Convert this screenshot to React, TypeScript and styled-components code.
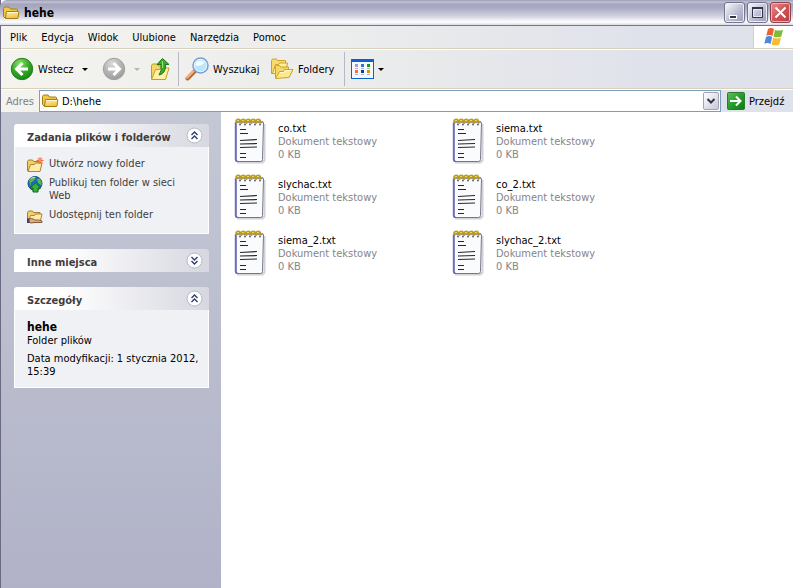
import React from 'react';
import styled, { createGlobalStyle, css } from 'styled-components';

const GlobalStyle = createGlobalStyle`
  * { box-sizing: border-box; }
  body { margin: 0; background: #fff; }
  body, button, input { font-family: "DejaVu Sans Condensed", "Noto Sans", sans-serif; font-size: 11px; color: #000; }
  button { border: 0; background: none; padding: 0; cursor: pointer; }
  svg { display: block; flex: none; }
`;

const Window = styled.div`
  display: flex;
  flex-direction: column;
  min-height: 100vh;
  border-left: 1px solid #6b6a84;
`;

const TitleBar = styled.header`
  display: flex;
  align-items: center;
  gap: 4px;
  height: 26px;
  padding: 0 2px 0 3px;
  margin-left: -1px;
  border-top-left-radius: 7px;
  border-bottom: 1px solid #77768f;
  background: linear-gradient(#9a9ab2 0, #c4c4d6 2px, #a4a4bd 4px, #abacc4 8px, #d0d0df 16px, #fff 22px, #d8d8e4 25px);
`;

const Title = styled.h1`
  flex: 1;
  margin: 0;
  font-size: 12px;
  line-height: 16px;
  font-weight: bold;
`;

const Captions = styled.div`
  display: flex;
  gap: 2px;
`;

const CaptionButton = styled.button<{ $close?: boolean }>`
  display: grid;
  place-items: center;
  width: 21px;
  height: 21px;
  border: 1px solid ${p => (p.$close ? '#8c4450' : '#74748e')};
  border-radius: 3px;
  box-shadow: inset 0 0 0 1px ${p => (p.$close ? '#eeb0b0' : '#ededf6')};
  background: ${p => (p.$close
    ? 'linear-gradient(135deg, #e89090, #d25454 50%, #b83c44)'
    : 'linear-gradient(135deg, #fafafe, #b9b9cf 60%, #9c9cba)')};
`;

const barFill = css`
  background: linear-gradient(90deg, #f4f3ee, #ebecec 45%, #dfe1eb 85%);
`;

const MenuBar = styled.nav`
  ${barFill}
  display: flex;
  align-items: stretch;
  height: 23px;
  border-bottom: 1px solid #d8d2bd;
`;

const MenuList = styled.div`
  display: flex;
  flex: 1;
  gap: 14px;
  padding-left: 9px;
`;

const MenuItem = styled.button`
  line-height: 20px;
  padding-top: 1px;
`;

const FlagBox = styled.div`
  display: grid;
  place-items: center;
  width: 40px;
  border-left: 1px solid #d8d2bd;
  background: #fff;
`;

const ToolBar = styled.div`
  ${barFill}
  display: flex;
  align-items: center;
  height: 40px;
  padding-left: 9px;
  border-top: 1px solid #fff;
  border-bottom: 1px solid #d8d2bd;
`;

const ToolButton = styled.button<{ $width: number }>`
  display: flex;
  align-items: center;
  gap: 4px;
  width: ${p => p.$width}px;
  height: 30px;
  white-space: nowrap;
`;

const Divider = styled.div`
  width: 1px;
  height: 34px;
  margin-right: 6px;
  background: #b8b8c4;
`;

const Caret = styled.span<{ $faded?: boolean }>`
  border: 3px solid transparent;
  border-top-color: ${p => (p.$faded ? '#b5b5b5' : '#000')};
  border-bottom: 0;
`;

const AddressBar = styled.form`
  ${barFill}
  display: flex;
  align-items: center;
  height: 23px;
  padding-left: 5px;
  border-top: 1px solid #fff;
`;

const AddressLabel = styled.label`
  width: 33px;
  color: #7f7f86;
`;

const AddressField = styled.div`
  display: flex;
  flex: 1;
  align-items: center;
  gap: 3px;
  height: 22px;
  padding: 0 1px 0 2px;
  border: 1px solid #7f9db9;
  background: #fff;
`;

const AddressInput = styled.input`
  flex: 1;
  min-width: 0;
  padding: 0;
  border: 0;
  outline: 0;
  background: none;
`;

const DropButton = styled.button`
  display: grid;
  place-items: center;
  width: 16px;
  height: 18px;
  border: 1px solid #a3a3b8;
  border-radius: 2px;
  background: linear-gradient(135deg, #fff, #c8c8d8);
`;

const GoButton = styled.button`
  display: flex;
  align-items: center;
  gap: 4px;
  width: 72px;
  padding-left: 6px;
`;

const Main = styled.div`
  display: flex;
  flex: 1;
`;

const Sidebar = styled.aside`
  display: flex;
  flex-direction: column;
  gap: 15px;
  width: 220px;
  padding: 12px 12px 12px 13px;
  background: linear-gradient(#c4c8d4, #b1b2c8);
`;

const PanelHead = styled.h2`
  display: flex;
  align-items: center;
  justify-content: space-between;
  height: 23px;
  margin: 0;
  padding: 0 6px 0 13px;
  border-radius: 3px 3px 0 0;
  background: linear-gradient(90deg, #fff 25%, #d6d7e0);
  color: #3f3d3d;
  font-size: 11px;
`;

const PanelTitle = styled.span`
  padding-top: 3px;
`;

const PanelBody = styled.div<{ $kind: 'tasks' | 'details' }>`
  padding: ${p => (p.$kind === 'tasks' ? '10px 12px 6px' : '10px 8px 4px 12px')};
  border: 1px solid #fff;
  border-top: 0;
  background: #f0f1f5;
  line-height: 13px;
`;

const Task = styled.a`
  display: grid;
  grid-template-columns: 16px 1fr;
  gap: 6px;
  margin-bottom: 6px;
  color: #3f3d3d;
  text-decoration: none;
`;

const TaskIcon = styled.span`
  height: 13px;
`;

const Detail = styled.p`
  margin: 0 0 5px;
`;

const DetailName = styled.strong`
  display: block;
  font-size: 12px;
  line-height: 14px;
`;

const Files = styled.ul`
  display: grid;
  flex: 1;
  grid-template-columns: repeat(auto-fill, 218px);
  grid-auto-rows: 56px;
  align-content: start;
  max-width: 480px;
  margin: 0;
  padding: 1px 0 0 13px;
  list-style: none;
`;

const File = styled.li`
  display: flex;
  align-items: center;
  gap: 12px;
  line-height: 13px;
`;

const FileMeta = styled.span`
  display: block;
  color: #85858b;
`;

const FileName = styled.span`
  display: block;
`;

const FolderIcon = () => (
  <svg width="17" height="16" viewBox="0 0 17 16">
    <defs>
      <linearGradient id="folder" x2=".3" y2="1">
        <stop stopColor="#fff3a8" /><stop offset="1" stopColor="#efc245" />
      </linearGradient>
    </defs>
    <path d="M.5 11.500V3.500l1-1.500h4.500l1.500 2h6q1 0 1 1v8H2z" fill="#f0c845" stroke="#a87c16" />
    <path d="M2.500 13.500l.8-6.500q.1-.5.700-.5h11.500q.5 0 .4.500l-.9 6q-.1.500-.6.500z" fill="url(#folder)" stroke="#a87c16" />
    <path d="M4 7.500h11" stroke="#fffbd8" />
  </svg>
);

const RoundArrow = ({ dir }: { dir: 'back' | 'forward' }) => {
  const on = dir === 'back';
  return (
    <svg width="24" height="24" viewBox="0 0 24 24">
      <defs>
        <radialGradient id={`g-${dir}`} cx=".4" cy=".25" r=".8">
          <stop offset="0" stopColor={on ? '#8be06c' : '#d9d9d9'} />
          <stop offset=".55" stopColor={on ? '#34a726' : '#b3b3b3'} />
          <stop offset="1" stopColor={on ? '#118410' : '#999'} />
        </radialGradient>
      </defs>
      <circle cx="12" cy="12" r="10.700" fill={`url(#g-${dir})`} stroke={on ? '#23801b' : '#a0a0a0'} />
      <path
        d={on ? 'M18 12H7M12.500 6l-6 6 6 6' : 'M6 12h11M11.500 6l6 6-6 6'}
        fill="none" stroke="#fff" strokeWidth="3"
      />
    </svg>
  );
};

const UpIcon = () => (
  <svg width="22" height="24" viewBox="0 0 22 24">
    <path d="M1.500 21.500V8.500l1-1.500h5l1 2h6.500v12z" fill="#f5d765" stroke="#c59a20" />
    <path d="M1.500 22.500l4-10h4l1-1.500h8.500l-3.500 11.500z" fill="#fff0a6" stroke="#c89b18" />
    <path d="M7 7.500L12.500 1.500l6.500 6h-3.500q.5 9-6.500 10.500 3-3.500 2-10.500z" fill="#39ad2b" stroke="#167516" />
    <path d="M12.500 4v7" stroke="#90e36c" />
  </svg>
);

const SearchIcon = () => (
  <svg width="24" height="24" viewBox="0 0 24 24">
    <path d="M2.500 21.500l7-7" stroke="#b5683a" strokeWidth="4" strokeLinecap="round" />
    <path d="M2 20.800l6.500-6.500" stroke="#f9b374" strokeWidth="2" strokeLinecap="round" />
    <circle cx="15.500" cy="8.500" r="7.500" fill="#b9e6fc" stroke="#7c9cd4" strokeWidth="1.500" />
    <circle cx="15.500" cy="8.500" r="6.200" fill="none" stroke="#e8f6fe" />
    <path d="M10.500 8.500a5 5 0 0 1 9-3q-3 4-9 3z" fill="#f4fdff" />
  </svg>
);

const FoldersIcon = () => (
  <svg width="23" height="22" viewBox="0 0 23 22" stroke="#cda02a" strokeLinejoin="round">
    <path d="M.5 15.500v-13l1-1.500h4l1 1.500h8v13z" fill="#f6dc70" />
    <path d="M1.500 15.500l3-9h3l1-1.500h8l-2 11z" fill="#fff0a0" />
    <path d="M4.500 19.500v-11l1-1h3l1 1.500h8v10z" fill="#f6d869" />
    <path d="M4.500 20.500l4-7h4l1-2h8.500l-4 8z" fill="#ffe987" />
    <path d="M9 14.500h4l1-2h6" fill="none" stroke="#fffbd9" />
  </svg>
);

const ViewsIcon = () => (
  <svg width="23" height="20" viewBox="0 0 23 20" shapeRendering="crispEdges">
    <rect width="23" height="20" fill="#1060cc" />
    <rect x="1" y="3" width="21" height="16" fill="#f6f8ff" />
    {['#a29bd0', '#3073e0', '#109c18', '#f26c3c', '#10409c', '#d09d00'].map((c, i) => (
      <g key={c}>
        <rect x={4 + (i % 3) * 6} y={i < 3 ? 5 : 11} width="3" height="3" fill={c} />
        <rect x={4 + (i % 3) * 6} y={i < 3 ? 9 : 15} width="3" height="1" fill="#b5b5b5" />
      </g>
    ))}
  </svg>
);

const FlagIcon = () => (
  <svg width="20" height="20" viewBox="0 0 20 20">
    <path d="M4 2q3-2 6 0L8.500 9q-3-2-6.200-.2z" fill="#ed6031" />
    <path d="M11 2.700q3.500 1.700 8 0L17.300 9.500q-4 1.700-7.800 0z" fill="#81b93a" />
    <path d="M2 10q3.300-1.800 6.200 0l-1.600 7q-3-1.800-6.300-.2z" fill="#4d88dc" />
    <path d="M9.200 10.500q3.700 1.800 7.800 0l-1.700 7q-4 1.700-7.700 0z" fill="#f6be2d" />
  </svg>
);

const GoIcon = () => (
  <svg width="18" height="18" viewBox="0 0 18 18">
    <defs>
      <linearGradient id="go" x2="1" y2="1">
        <stop stopColor="#65bd5e" /><stop offset=".5" stopColor="#259d2c" /><stop offset="1" stopColor="#087a10" />
      </linearGradient>
    </defs>
    <rect x=".5" y=".5" width="17" height="17" rx="1" fill="url(#go)" stroke="#2a7d30" />
    <path d="M3 9h10M9 4.500L13.500 9 9 13.500" fill="none" stroke="#fff" strokeWidth="2" />
  </svg>
);

const Chevrons = ({ up }: { up: boolean }) => (
  <svg width="17" height="17" viewBox="0 0 17 17">
    <circle cx="8.500" cy="8.500" r="7.500" fill="#fff" stroke="#b5b7c8" />
    <path
      d={up ? 'M5.500 8l3-3 3 3M5.500 12l3-3 3 3' : 'M5.500 5l3 3 3-3M5.500 9l3 3 3-3'}
      fill="none" stroke="#303c68" strokeWidth="1.400"
    />
  </svg>
);

const OpenFolder = () => (
  <>
    <path d="M.5 13.500v-9l1-1.500h4l1 1.500h6.500v9z" fill="#f3cf6c" stroke="#a77c2c" />
    <path d="M1 14.500l2.500-7h4l1-1.500h6.500l-2 8.500z" fill="#ffeba8" stroke="#b08430" />
  </>
);

const NewFolderIcon = () => (
  <svg width="17" height="16" viewBox="0 0 17 16">
    <OpenFolder />
    <path d="M13 0v7M9.500 3.500h7M10.500 1l5 5M15.500 1l-5 5" stroke="#ee6537" />
    <circle cx="13" cy="3.500" r="1.500" fill="#ff8a4c" />
  </svg>
);

const PublishIcon = () => (
  <svg width="17" height="17" viewBox="0 0 17 17">
    <circle cx="8" cy="7.500" r="7" fill="#2266bd" stroke="#1c4c87" />
    <path d="M2 4q3-4 7-3L7.500 4 4 6.500 3.500 10zM10 3l3-.5q2 3 1.500 7L11 7z" fill="#54bd4b" />
    <path d="M4 2.500q2-1.500 4-1" stroke="#a6dcf4" fill="none" />
    <path d="M8.500 7l5.500 5h-3v4H6v-4H3z" fill="#37b530" stroke="#126b19" />
  </svg>
);

const ShareIcon = () => (
  <svg width="17" height="16" viewBox="0 0 17 16">
    <OpenFolder />
    <path d="M1 11l4-.5 3 1.500h4l3 1v1.500H8l-4 .5-3-1z" fill="#e5aa7c" stroke="#70482c" strokeWidth=".8" />
    <path d="M0 10.500v4.500h2.500v-4.500z" fill="#44415b" />
  </svg>
);

const NotepadIcon = () => (
  <svg width="32" height="46" viewBox="0 0 32 46">
    <path d="M3 44.500h25.500l2-2V6" fill="none" stroke="#d2d2d6" strokeWidth="2" />
    <path d="M1.500 4.500h28l-1 37q0 2-2 2H3q-1.500 0-1.500-1.500z" fill="#fafbfc" stroke="#74778a" />
    <path d="M1.800 4.500v37q0 1.500 1.500 1.800" fill="none" stroke="#6d6bb4" strokeWidth="2" />
    <path d="M2 4h27" stroke="#9493b8" strokeWidth="2" />
    {[3, 8, 13, 18, 23].map(x => (
      <g key={x} fill="none">
        <path d={`M${x} 5.500q-2-3.500 1-4 3 0 2.500 4`} stroke="#b89c20" strokeWidth="2" />
        <path d={`M${x} 3q1-1.200 2-.5`} stroke="#f0dc62" />
        <circle cx={x + 3} cy="6.500" r=".9" fill="#55536e" />
      </g>
    ))}
    <path d="M6 11.500h6M6 15.500h8M6 35.500h6M6 39.500h6M6 29.500l17-.5" stroke="#24282c" />
    <path d="M6 22.500l17-1M6 26l17-.5" stroke="#24282c" strokeWidth="1.200" />
  </svg>
);

const files = ['co.txt', 'siema.txt', 'slychac.txt', 'co_2.txt', 'siema_2.txt', 'slychac_2.txt'];
const menus = ['Plik', 'Edycja', 'Widok', 'Ulubione', 'Narzędzia', 'Pomoc'];
const tasks = [
  { icon: <NewFolderIcon />, text: 'Utwórz nowy folder' },
  { icon: <PublishIcon />, text: 'Publikuj ten folder w sieci Web' },
  { icon: <ShareIcon />, text: 'Udostępnij ten folder' },
];

const Heading = ({ text, up }: { text: string; up: boolean }) => (
  <PanelHead>
    <PanelTitle>{text}</PanelTitle>
    <button type="button" aria-label={text} aria-expanded={up}><Chevrons up={up} /></button>
  </PanelHead>
);

export default function App() {
  return (
    <>
      <GlobalStyle />
      <Window>
        <TitleBar>
          <FolderIcon />
          <Title>hehe</Title>
          <Captions>
            <CaptionButton aria-label="Minimalizuj">
              <svg width="15" height="15" viewBox="0 0 15 15"><path d="M2 10h8v4H2z" fill="#fff" /><path d="M3 11h6v2H3z" fill="#33334c" /></svg>
            </CaptionButton>
            <CaptionButton aria-label="Maksymalizuj">
              <svg width="15" height="15" viewBox="0 0 15 15" fill="none"><path d="M2.500 3v9.500h10V3" stroke="#33334c" /><path d="M2 3h11" stroke="#33334c" strokeWidth="2" /><path d="M3.500 4.500h8v7h-8z" stroke="#e8e8f2" /></svg>
            </CaptionButton>
            <CaptionButton $close aria-label="Zamknij">
              <svg width="15" height="15" viewBox="0 0 15 15"><path d="M2.500 2.500l10 10M12.500 2.500l-10 10" stroke="#fff" strokeWidth="2" /></svg>
            </CaptionButton>
          </Captions>
        </TitleBar>
        <MenuBar>
          <MenuList>{menus.map(m => <MenuItem key={m}>{m}</MenuItem>)}</MenuList>
          <FlagBox><FlagIcon /></FlagBox>
        </MenuBar>
        <ToolBar>
          <ToolButton $width={72}><RoundArrow dir="back" />Wstecz</ToolButton>
          <ToolButton $width={20} aria-label="Historia wstecz"><Caret /></ToolButton>
          <ToolButton $width={32} disabled aria-label="Dalej"><RoundArrow dir="forward" /></ToolButton>
          <ToolButton $width={16} disabled aria-label="Historia dalej"><Caret $faded /></ToolButton>
          <ToolButton $width={28} aria-label="W górę"><UpIcon /></ToolButton>
          <Divider />
          <ToolButton $width={86}><SearchIcon />Wyszukaj</ToolButton>
          <ToolButton $width={73}><FoldersIcon />Foldery</ToolButton>
          <Divider />
          <ToolButton $width={34} aria-label="Widoki"><ViewsIcon /><Caret /></ToolButton>
        </ToolBar>
        <AddressBar onSubmit={e => e.preventDefault()}>
          <AddressLabel htmlFor="address">Adres</AddressLabel>
          <AddressField>
            <FolderIcon />
            <AddressInput id="address" defaultValue={'D:\\hehe'} />
            <DropButton type="button" aria-label="Rozwiń">
              <svg width="10" height="8" viewBox="0 0 10 8"><path d="M1.500 2L5 5.500 8.500 2" fill="none" stroke="#35354a" strokeWidth="2" /></svg>
            </DropButton>
          </AddressField>
          <GoButton type="submit"><GoIcon />Przejdź</GoButton>
        </AddressBar>
        <Main>
          <Sidebar>
            <section>
              <Heading text="Zadania plików i folderów" up />
              <PanelBody $kind="tasks">
                {tasks.map(t => (
                  <Task key={t.text} href="#"><TaskIcon>{t.icon}</TaskIcon><span>{t.text}</span></Task>
                ))}
              </PanelBody>
            </section>
            <section><Heading text="Inne miejsca" up={false} /></section>
            <section>
              <Heading text="Szczegóły" up />
              <PanelBody $kind="details">
                <Detail><DetailName>hehe</DetailName>Folder plików</Detail>
                <Detail>Data modyfikacji: 1 stycznia 2012, 15:39</Detail>
              </PanelBody>
            </section>
          </Sidebar>
          <Files>
            {files.map(f => (
              <File key={f}>
                <NotepadIcon />
                <div>
                  <FileName>{f}</FileName>
                  <FileMeta>Dokument tekstowy</FileMeta>
                  <FileMeta>0 KB</FileMeta>
                </div>
              </File>
            ))}
          </Files>
        </Main>
      </Window>
    </>
  );
}
